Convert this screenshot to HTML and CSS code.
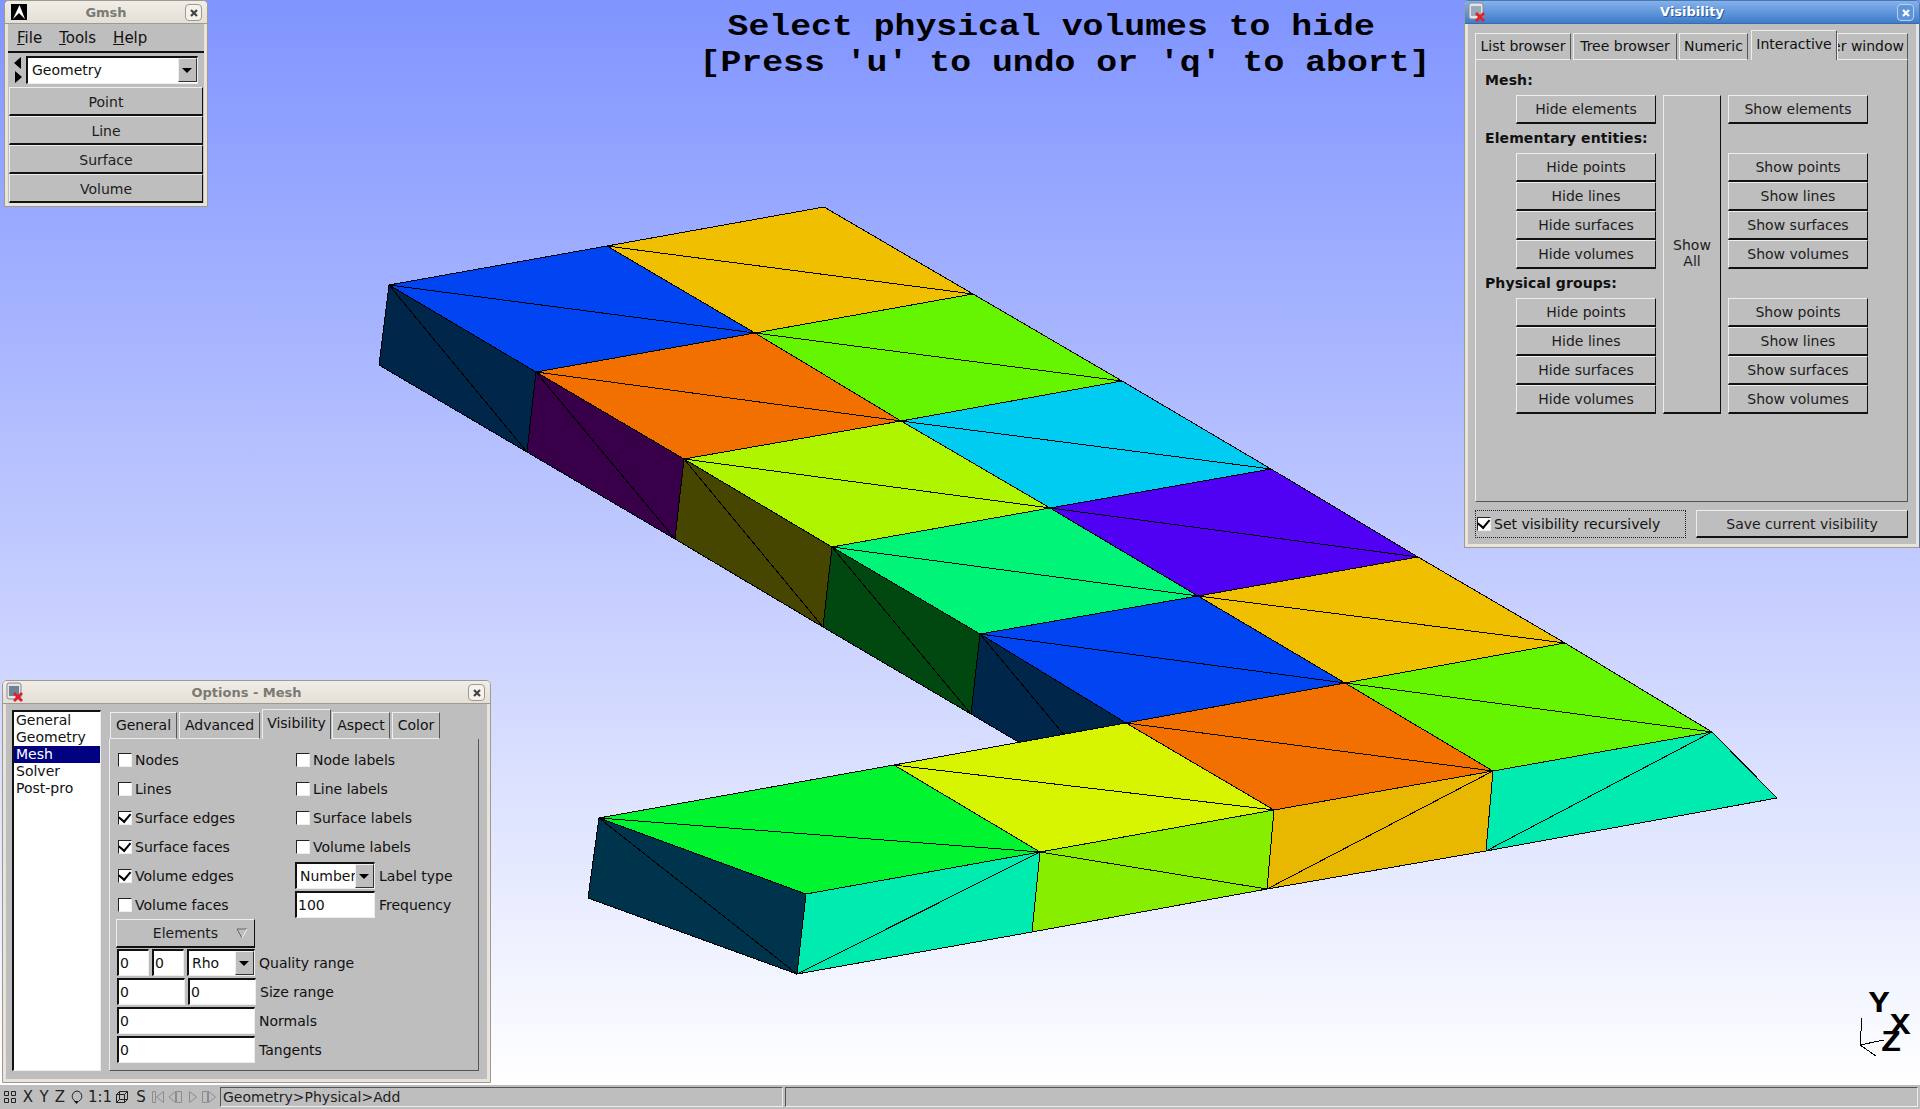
FILE: index.html
```html
<!DOCTYPE html>
<html lang="en">
<head>
    <meta charset="UTF-8">
    <title>Gmsh</title>
    <link rel="stylesheet" href="styles.css">
</head>
<body>
    <div class="desktop">
        <svg class="mesh" width="1920" height="1085" viewBox="0 0 1920 1085">
            <!-- side faces of the upper arm -->
            <polygon class="navy" points="389,285 536,372 527,452 379,365"/><line x1="389" y1="285" x2="527" y2="452"/>
            <polygon class="plum" points="536,372 684,459 675,539 527,452"/><line x1="536" y1="372" x2="675" y2="539"/>
            <polygon class="olive" points="684,459 832,547 823,627 675,539"/><line x1="684" y1="459" x2="823" y2="627"/>
            <polygon class="forest" points="832,547 980,634 971,714 823,627"/><line x1="832" y1="547" x2="971" y2="714"/>
            <polygon class="navy" points="980,634 1126,723 1120,802 971,714"/><line x1="980" y1="634" x2="1120" y2="802"/>
            <!-- top faces -->
            <polygon class="blue" points="389,285 607,246 755,333 536,372"/><line x1="389" y1="285" x2="755" y2="333"/>
            <polygon class="gold" points="607,246 824,207 973,294 755,333"/><line x1="607" y1="246" x2="973" y2="294"/>
            <polygon class="orange" points="536,372 755,333 901,421 684,459"/><line x1="536" y1="372" x2="901" y2="421"/>
            <polygon class="green" points="755,333 973,294 1122,381 901,421"/><line x1="755" y1="333" x2="1122" y2="381"/>
            <polygon class="lime" points="684,459 901,421 1050,508 832,547"/><line x1="684" y1="459" x2="1050" y2="508"/>
            <polygon class="cyan" points="901,421 1122,381 1271,469 1050,508"/><line x1="901" y1="421" x2="1271" y2="469"/>
            <polygon class="spring" points="832,547 1050,508 1198,596 980,634"/><line x1="832" y1="547" x2="1198" y2="596"/>
            <polygon class="violet" points="1050,508 1271,469 1418,557 1198,596"/><line x1="1050" y1="508" x2="1418" y2="557"/>
            <polygon class="blue" points="980,634 1198,596 1345,683 1126,723"/><line x1="980" y1="634" x2="1345" y2="683"/>
            <polygon class="gold" points="1198,596 1418,557 1565,643 1345,683"/><line x1="1198" y1="596" x2="1565" y2="643"/>
            <polygon class="orange" points="1126,723 1345,683 1493,771 1274,810"/><line x1="1126" y1="723" x2="1493" y2="771"/>
            <polygon class="green" points="1345,683 1565,643 1712,732 1493,771"/><line x1="1345" y1="683" x2="1712" y2="732"/>
            <polygon class="yellow" points="894,765 1126,723 1274,810 1040,852"/><line x1="894" y1="765" x2="1274" y2="810"/>
            <polygon class="emerald" points="599,818 894,765 1040,852 806,894"/><line x1="599" y1="818" x2="1040" y2="852"/>
            <!-- front faces of the lower arm -->
            <polygon class="teal" points="599,818 806,894 797,974 588,898"/><line x1="599" y1="818" x2="797" y2="974"/>
            <polygon class="aqua" points="806,894 1040,852 1032,932 797,974"/><line x1="797" y1="974" x2="1040" y2="852"/>
            <polygon class="grass" points="1040,852 1274,810 1267,889 1032,932"/><line x1="1040" y1="852" x2="1267" y2="889"/>
            <polygon class="amber" points="1274,810 1493,771 1486,851 1267,889"/><line x1="1267" y1="889" x2="1493" y2="771"/>
            <polygon class="aqua" points="1493,771 1712,732 1777,798 1486,851"/><line x1="1486" y1="851" x2="1712" y2="732"/>
            <!-- small axes -->
            <line x1="1862" y1="1018" x2="1860" y2="1045"/><line x1="1860" y1="1045" x2="1884" y2="1040"/><line x1="1860" y1="1045" x2="1876" y2="1056"/>
        </svg>

        <div class="gl-title">
            <div class="gl-line-first">Select physical volumes to hide</div>
            <div>[Press 'u' to undo or 'q' to abort]</div>
        </div>
        <span class="axis axis-y">Y</span>
        <span class="axis axis-x">X</span>
        <span class="axis axis-z">Z</span>

        <!-- main window -->
        <div class="window win-gmsh">
            <div class="titlebar">
                <svg class="win-icon icon-gmsh" width="16" height="16" viewBox="0 0 16 16"><rect width="16" height="16" fill="#000"/><path d="M2 15 L8.500 1 L14 15 L8 9 Z" fill="#fff"/></svg>
                <span class="title-text">Gmsh</span>
                <span class="close-btn"><svg width="10" height="10" viewBox="0 0 10 10"><path d="M2 2 L8 8 M8 2 L2 8" stroke="#444" stroke-width="2.200"/></svg></span>
            </div>
            <div class="win-body gmsh-body">
                <div class="menubar">
                    <span><u>F</u>ile</span>
                    <span><u>T</u>ools</span>
                    <span><u>H</u>elp</span>
                </div>
                <div class="module-row">
                    <svg class="nav-arrows" width="10" height="28" viewBox="0 0 10 28"><path d="M8 1 V13 L1 7 Z M2 15 V27 L9 21 Z" fill="#000"/></svg>
                    <div class="choice module-choice">
                        <span class="choice-value">Geometry</span>
                        <span class="choice-arrow"></span>
                    </div>
                </div>
                <div class="btn menu-btn">Point</div>
                <div class="btn menu-btn">Line</div>
                <div class="btn menu-btn">Surface</div>
                <div class="btn menu-btn">Volume</div>
            </div>
        </div>

        <!-- visibility window -->
        <div class="window win-vis">
            <div class="titlebar titlebar-active">
                <svg class="win-icon" width="18" height="20" viewBox="0 0 18 20"><rect x="1" y="1" width="14" height="16" rx="2" fill="#e4e4e4" stroke="#8a8a8a"/><rect x="3" y="4" width="10" height="10" fill="#9ab"/><path d="M7 12 L9 10 L12 13 L15 10 L17 12 L14 15 L17 18 L15 20 L12 17 L9 20 L7 18 L10 15 Z" fill="#e0202a"/></svg>
                <span class="title-text">Visibility</span>
                <span class="close-btn close-active"><svg width="10" height="10" viewBox="0 0 10 10"><path d="M2 2 L8 8 M8 2 L2 8" stroke="#fff" stroke-width="2.200"/></svg></span>
            </div>
            <div class="win-body vis-body">
                <div class="tabs vis-tabs">
                    <span class="tab tab-list">List browser</span>
                    <span class="tab tab-tree">Tree browser</span>
                    <span class="tab tab-num">Numeric</span>
                    <span class="tab tab-cur tab-inter">Interactive</span>
                    <span class="tab tab-win">er window</span>
                </div>
                <div class="panel vis-panel">
                    <div class="vis-grid">
                        <div class="vis-labels">
                            <b class="vis-head">Mesh:</b>
                            <div class="btn vis-btn">Hide elements</div>
                            <b class="vis-head vis-head-gap">Elementary entities:</b>
                            <div class="btn vis-btn">Hide points</div>
                            <div class="btn vis-btn">Hide lines</div>
                            <div class="btn vis-btn">Hide surfaces</div>
                            <div class="btn vis-btn">Hide volumes</div>
                            <b class="vis-head vis-head-gap">Physical groups:</b>
                            <div class="btn vis-btn">Hide points</div>
                            <div class="btn vis-btn">Hide lines</div>
                            <div class="btn vis-btn">Hide surfaces</div>
                            <div class="btn vis-btn">Hide volumes</div>
                        </div>
                        <div class="btn show-all">Show<br>All</div>
                        <div class="vis-right">
                            <div class="btn vis-btn">Show elements</div>
                            <div class="vis-skip"></div>
                            <div class="btn vis-btn">Show points</div>
                            <div class="btn vis-btn">Show lines</div>
                            <div class="btn vis-btn">Show surfaces</div>
                            <div class="btn vis-btn">Show volumes</div>
                            <div class="vis-skip"></div>
                            <div class="btn vis-btn">Show points</div>
                            <div class="btn vis-btn">Show lines</div>
                            <div class="btn vis-btn">Show surfaces</div>
                            <div class="btn vis-btn">Show volumes</div>
                        </div>
                    </div>
                </div>
                <div class="vis-footer">
                    <div class="recursive">
                        <span class="check on"></span>
                        <span>Set visibility recursively</span>
                    </div>
                    <div class="btn save-btn">Save current visibility</div>
                </div>
            </div>
        </div>

        <!-- options window -->
        <div class="window win-opt">
            <div class="titlebar">
                <svg class="win-icon" width="18" height="20" viewBox="0 0 18 20"><rect x="1" y="1" width="14" height="16" rx="2" fill="#e4e4e4" stroke="#8a8a8a"/><rect x="3" y="4" width="10" height="10" fill="#6d8296"/><path d="M7 12 L9 10 L12 13 L15 10 L17 12 L14 15 L17 18 L15 20 L12 17 L9 20 L7 18 L10 15 Z" fill="#e0202a"/></svg>
                <span class="title-text">Options - Mesh</span>
                <span class="close-btn"><svg width="10" height="10" viewBox="0 0 10 10"><path d="M2 2 L8 8 M8 2 L2 8" stroke="#444" stroke-width="2.200"/></svg></span>
            </div>
            <div class="win-body opt-body">
                <ul class="cat-list">
                    <li>General</li>
                    <li>Geometry</li>
                    <li class="selected">Mesh</li>
                    <li>Solver</li>
                    <li>Post-pro</li>
                </ul>
                <div class="opt-main">
                    <div class="tabs opt-tabs">
                        <span class="tab tab-a">General</span>
                        <span class="tab tab-b">Advanced</span>
                        <span class="tab tab-cur tab-c">Visibility</span>
                        <span class="tab tab-d">Aspect</span>
                        <span class="tab tab-e">Color</span>
                    </div>
                    <div class="panel opt-panel">
                        <div class="opt-rows">
                            <label class="row"><span class="check"></span>Nodes</label>
                            <label class="row"><span class="check"></span>Node labels</label>
                            <label class="row"><span class="check"></span>Lines</label>
                            <label class="row"><span class="check"></span>Line labels</label>
                            <label class="row"><span class="check on"></span>Surface edges</label>
                            <label class="row"><span class="check"></span>Surface labels</label>
                            <label class="row"><span class="check on"></span>Surface faces</label>
                            <label class="row"><span class="check"></span>Volume labels</label>
                            <label class="row"><span class="check on"></span>Volume edges</label>
                            <div class="row row-field">
                                <div class="choice field-short"><span class="choice-value">Number</span><span class="choice-arrow"></span></div>
                                <span>Label type</span>
                            </div>
                            <label class="row"><span class="check"></span>Volume faces</label>
                            <div class="row row-field">
                                <div class="input field-short">100</div>
                                <span>Frequency</span>
                            </div>
                        </div>
                        <div class="btn elements-btn">Elements<svg class="tri" width="12" height="11" viewBox="0 0 12 11"><path d="M1 1 H11" stroke="#666" fill="none"/><path d="M1 1 L6 10" stroke="#666" fill="none"/><path d="M11 1 L6 10" stroke="#f0f0f0" fill="none"/></svg></div>
                        <div class="range-row">
                            <div class="input w32">0</div>
                            <div class="input w32">0</div>
                            <div class="choice w68"><span class="choice-value">Rho</span><span class="choice-arrow"></span></div>
                            <span class="range-label">Quality range</span>
                        </div>
                        <div class="range-row">
                            <div class="input w68">0</div>
                            <div class="input w68">0</div>
                            <span class="range-label">Size range</span>
                        </div>
                        <div class="range-row">
                            <div class="input w138">0</div>
                            <span class="range-label">Normals</span>
                        </div>
                        <div class="range-row">
                            <div class="input w138">0</div>
                            <span class="range-label">Tangents</span>
                        </div>
                    </div>
                </div>
            </div>
        </div>
    </div>

    <div class="statusbar">
        <svg class="st-icon st-squares" width="14" height="14" viewBox="0 0 14 14"><path d="M1.500 1.500 H5.500 V5.500 H1.500 Z M8.500 1.500 H12.500 V5.500 H8.500 Z M1.500 8.500 H5.500 V12.500 H1.500 Z M8.500 8.500 H12.500 V12.500 H8.500 Z" fill="none" stroke="#222"/></svg>
        <span class="st-item st-x">X</span>
        <span class="st-item st-y">Y</span>
        <span class="st-item st-z">Z</span>
        <svg class="st-icon st-rotate" width="12" height="16" viewBox="0 0 12 16"><path d="M4 12 C0 10 0 3 6 2 C12 3 12 10 8 12" fill="none" stroke="#222"/><path d="M3 12 L8 12 L5.500 15 Z" fill="#111"/></svg>
        <span class="st-item st-ratio">1:1</span>
        <svg class="st-icon st-cube" width="14" height="14" viewBox="0 0 14 14"><path d="M1.500 4.500 H9.500 V12.500 H1.500 Z M4.500 1.500 H12.500 V9.500 H4.500 Z M1.500 4.500 L4.500 1.500 M9.500 4.500 L12.500 1.500 M1.500 12.500 L4.500 9.500 M9.500 12.500 L12.500 9.500" fill="none" stroke="#222"/></svg>
        <span class="st-item st-s">S</span>
        <svg class="st-icon st-nav" width="66" height="14" viewBox="0 0 66 14"><path d="M1.500 1.500 V12.500 H4.500 V1.500 Z M12.500 1.500 L5.500 7 L12.500 12.500 Z M24.500 1.500 L18 7 L24.500 12.500 Z M25.500 1.500 V12.500 H30.500 V1.500 Z M38.500 1.500 L45.500 7 L38.500 12.500 Z M51.500 1.500 V12.500 H56.500 V1.500 Z M57.500 1.500 L64.500 7 L57.500 12.500 Z" fill="none" stroke="#8c8c8c"/></svg>
        <div class="st-box st-msg">Geometry&gt;Physical&gt;Add</div>
        <div class="st-box st-msg2"></div>
    </div>
</body>
</html>
```

FILE: styles.css
```css
* {
    box-sizing: border-box;
}

html, body {
    margin: 0;
    height: 100%;
}

body {
    display: flex;
    flex-direction: column;
    height: 1109px;
    overflow: hidden;
    background-color: #bebebe;
    color: #111;
    font-family: "DejaVu Sans", sans-serif;
    font-size: 14px;
}

.desktop {
    position: relative;
    height: 1085px;
    flex: none;
    background: linear-gradient(#8094ff, #ffffff);
}

.mesh {
    position: absolute;
    top: 0;
    left: 0;
    shape-rendering: crispEdges;
}

.mesh polygon, .mesh line {
    stroke: #000;
    stroke-width: 1;
}

.navy { fill: #00264a; }
.plum { fill: #380048; }
.olive { fill: #464600; }
.forest { fill: #004810; }
.blue { fill: #0044f2; }
.gold { fill: #f0bf00; }
.orange { fill: #f27000; }
.green { fill: #66f500; }
.lime { fill: #aff500; }
.cyan { fill: #00ccf2; }
.spring { fill: #00f578; }
.violet { fill: #5000f2; }
.yellow { fill: #d7f500; }
.emerald { fill: #00f530; }
.teal { fill: #00344c; }
.aqua { fill: #00ebb0; }
.grass { fill: #88ee00; }
.amber { fill: #e8b800; }

.gl-title {
    position: absolute;
    top: 10px;
    left: 702px;
    width: 726px;
    text-align: center;
    font-family: "Liberation Mono", monospace;
    font-weight: bold;
    font-size: 29px;
    line-height: 36px;
    color: #000;
    white-space: nowrap;
    transform: scaleX(1.2);
}

.gl-line-first {
    padding-right: 23px;
}

.axis {
    position: absolute;
    font-family: "Liberation Mono", monospace;
    font-weight: bold;
    font-size: 30px;
    line-height: 30px;
    color: #000;
    transform: scaleX(1.15);
}

.axis-y { left: 1870px; top: 989px; }
.axis-x { left: 1891px; top: 1011px; }
.axis-z { left: 1882px; top: 1028px; }

/* window frames */
.window {
    position: absolute;
    display: flex;
    flex-direction: column;
    border: 1px solid #a09a8e;
    border-radius: 5px 5px 0 0;
    background-color: #e8e4dc;
    padding: 0 3px 3px;
}

.win-gmsh { left: 4px; top: 0; width: 204px; height: 207px; }
.win-vis { left: 1464px; top: 0; width: 456px; height: 548px; border-color: #4a76ad; border-bottom-color: #a09a8e; border-left-color: #a09a8e; }
.win-opt { left: 2px; top: 680px; width: 489px; height: 403px; }

.titlebar {
    position: relative;
    flex: none;
    display: flex;
    align-items: center;
    justify-content: center;
    height: 23px;
    margin: 0 -3px;
    padding: 0 3px;
    border-radius: 4px 4px 0 0;
    background: linear-gradient(#f0ede7, #e4e0d7);
    border-bottom: 1px solid #a09a8e;
}

.titlebar-active {
    padding-bottom: 2px;
    background: linear-gradient(#84b2ec, #3f7ccb);
    border-bottom-color: #3a6ba8;
}

.title-text {
    font-weight: bold;
    font-size: 13px;
    color: #7a7a72;
}

.titlebar-active .title-text {
    color: #fff;
    text-shadow: 1px 1px 0 #2a5a96;
}

.win-icon {
    position: absolute;
    left: 3px;
    top: 1px;
}

.icon-gmsh {
    left: 6px;
    top: 3px;
}

.close-btn {
    position: absolute;
    right: 5px;
    top: 3px;
    display: flex;
    align-items: center;
    justify-content: center;
    width: 17px;
    height: 17px;
    border: 1px solid #a09a8e;
    border-radius: 4px;
    background-color: #f4f2ec;
}

.close-active {
    background-color: #5e94d8;
    border-color: #b8d2f0;
}

.win-body {
    flex: 1;
    min-height: 0;
    background-color: #bebebe;
}

/* fltk like widgets */
.btn {
    display: flex;
    align-items: center;
    justify-content: center;
    background-color: #bebebe;
    border-top: 1px solid #eee;
    border-left: 1px solid #eee;
    border-right: 1px solid #111;
    border-bottom: 2px solid #111;
    color: #1c1c1c;
    text-align: center;
}

.input, .choice {
    display: flex;
    align-items: center;
    height: 27px;
    background-color: #fff;
    border-top: 2px solid #111;
    border-left: 2px solid #111;
    border-right: 1px solid #eee;
    border-bottom: 1px solid #eee;
    padding-left: 1px;
    overflow: hidden;
    white-space: nowrap;
}

.choice-value {
    flex: 1;
    min-width: 0;
    overflow: hidden;
    padding-left: 2px;
}

.choice-arrow {
    position: relative;
    flex: none;
    align-self: stretch;
    width: 19px;
    background-color: #bebebe;
    border-top: 1px solid #eee;
    border-left: 1px solid #eee;
    border-right: 1px solid #333;
    border-bottom: 1px solid #333;
}

.choice-arrow::after {
    content: "";
    position: absolute;
    top: 9px;
    left: 3px;
    border-left: 5px solid transparent;
    border-right: 5px solid transparent;
    border-top: 5px solid #000;
}

.check {
    flex: none;
    position: relative;
    display: inline-block;
    width: 14px;
    height: 14px;
    margin-right: 3px;
    background-color: #fff;
    border-top: 1px solid #222;
    border-left: 1px solid #222;
    border-right: 1px solid #eee;
    border-bottom: 1px solid #eee;
}

.check.on::after {
    content: "";
    position: absolute;
    left: 1px;
    top: 1px;
    width: 9px;
    height: 6px;
    border-left: 2.500px solid #000;
    border-bottom: 2.500px solid #000;
    transform: rotate(-50deg) translate(0, -1px);
}

.tabs {
    display: flex;
    align-items: flex-end;
}

.tab {
    display: flex;
    align-items: center;
    justify-content: center;
    flex: none;
    height: 27px;
    padding-bottom: 1px;
    border-top: 1px solid #eee;
    border-left: 1px solid #eee;
    border-right: 1px solid #555;
    border-bottom: 1px solid #eee;
    white-space: nowrap;
}

.tab-cur {
    height: 30px;
    padding-bottom: 3px;
    border-bottom: none;
    position: relative;
    z-index: 1;
}

.panel {
    background-color: #bebebe;
    border-left: 1px solid #eee;
    border-right: 1px solid #555;
    border-bottom: 1px solid #555;
}

/* main window */
.gmsh-body {
    display: flex;
    flex-direction: column;
    padding: 0 1px;
}

.menubar {
    display: flex;
    gap: 17px;
    align-items: center;
    height: 29px;
    padding-left: 9px;
    margin: 0 -1px;
    font-size: 15px;
    border-bottom: 2px solid #111;
}

.module-row {
    display: flex;
    align-items: center;
    height: 34px;
    padding: 0 5px 0 4px;
}

.nav-arrows {
    flex: none;
    margin-right: 3px;
}

.module-choice {
    flex: 1;
    height: 28px;
    padding-left: 2px;
    padding-bottom: 1px;
}

.menu-btn {
    height: 29px;
    padding-top: 1px;
}

/* visibility window */
.vis-body {
    display: flex;
    flex-direction: column;
    padding: 6px 8px 0 7px;
}

.vis-tabs {
    height: 30px;
    flex: none;
}

.tab-list { width: 96px; }
.tab-tree { width: 104px; margin-left: 2px; }
.tab-num { width: 69px; margin-left: 2px; }
.tab-inter { width: 86px; margin-left: 3px; }
.tab-win { width: 71px; justify-content: flex-end; padding-right: 3px; overflow: hidden; }

.vis-panel {
    height: 442px;
    padding: 11px 0 0 9px;
}

.vis-grid {
    display: flex;
    align-items: flex-start;
}

.vis-labels {
    display: flex;
    flex-direction: column;
    align-items: flex-start;
    width: 178px;
}

.vis-head {
    height: 24px;
    display: block;
    line-height: 18px;
    letter-spacing: 0.100px;
    font-size: 14px;
    white-space: nowrap;
}

.vis-head-gap {
    height: 29px;
    line-height: 29px;
}

.vis-labels .vis-btn {
    margin-left: 31px;
}

.vis-btn {
    width: 140px;
    height: 29px;
    flex: none;
}

.show-all {
    width: 58px;
    height: 319px;
    margin-top: 24px;
    padding-bottom: 3px;
}

.vis-right {
    display: flex;
    flex-direction: column;
    margin: 24px 0 0 7px;
}

.vis-skip {
    height: 29px;
}

.vis-footer {
    display: flex;
    justify-content: space-between;
    margin-top: 8px;
}

.recursive {
    display: flex;
    align-items: center;
    width: 211px;
    height: 28px;
    padding-left: 1px;
    padding-bottom: 1px;
    border: 1px dotted #222;
}

.save-btn {
    width: 212px;
    height: 28px;
}

/* options window */
.opt-body {
    display: flex;
    padding: 6px 8px 8px 6px;
}

.cat-list {
    flex: none;
    width: 89px;
    margin: 0;
    padding: 0;
    list-style: none;
    background-color: #fff;
    border-top: 2px solid #111;
    border-left: 2px solid #111;
    border-right: 1px solid #eee;
    border-bottom: 1px solid #eee;
}

.cat-list li {
    height: 17px;
    line-height: 17px;
    padding-left: 2px;
}

.cat-list .selected {
    background-color: #000080;
    color: #fff;
}

.opt-main {
    width: 370px;
    margin-left: 8px;
    display: flex;
    flex-direction: column;
}

.opt-tabs {
    height: 29px;
    flex: none;
}

.tab-a { width: 67px; margin-left: 1px; }
.tab-b { width: 81px; margin-left: 2px; }
.tab-c { width: 69px; margin-left: 2px; }
.tab-d { width: 58px; margin-left: 1px; }
.tab-e { width: 48px; margin-left: 2px; }

.opt-panel {
    flex: 1;
    padding: 6px 0 0 6px;
}

.opt-rows {
    display: grid;
    grid-template-columns: 178px 1fr;
    grid-auto-rows: 29px;
    width: 290px;
}

.row {
    display: flex;
    align-items: center;
    padding-left: 2px;
    white-space: nowrap;
}

.row-field {
    padding-left: 1px;
    gap: 4px;
}

.field-short {
    flex: none;
    width: 80px;
}

.elements-btn {
    position: relative;
    width: 139px;
    height: 29px;
}

.tri {
    position: absolute;
    right: 6px;
    top: 8px;
}

.range-row {
    display: flex;
    align-items: center;
    gap: 3px;
    height: 29px;
    padding-left: 1px;
}

.range-row .range-label {
    margin-left: 1px;
}

.w32 { width: 32px; }
.w68 { width: 68px; }
.w138 { width: 138px; }

/* status bar */
.statusbar {
    position: relative;
    display: flex;
    align-items: center;
    height: 24px;
    padding-left: 3px;
    font-size: 15px;
    color: #222;
}

.st-icon {
    flex: none;
}

.st-item {
    flex: none;
    text-align: center;
}

.st-x { width: 16px; margin-left: 3px; }
.st-y { width: 16px; }
.st-z { width: 16px; }
.st-rotate { margin-left: 3px; }
.st-ratio { width: 24px; margin-left: 5px; }
.st-cube { margin-left: 3px; }
.st-s { width: 14px; margin-left: 5px; }
.st-nav { margin-left: 3px; }

.st-box {
    flex: none;
    height: 20px;
    line-height: 18px;
    border-top: 1px solid #555;
    border-left: 1px solid #555;
    border-right: 1px solid #eee;
    border-bottom: 1px solid #eee;
    font-size: 14px;
}

.st-msg {
    width: 563px;
    margin-left: 3px;
    padding-left: 2px;
}

.st-msg2 {
    width: 1133px;
    margin-left: 2px;
}
```
